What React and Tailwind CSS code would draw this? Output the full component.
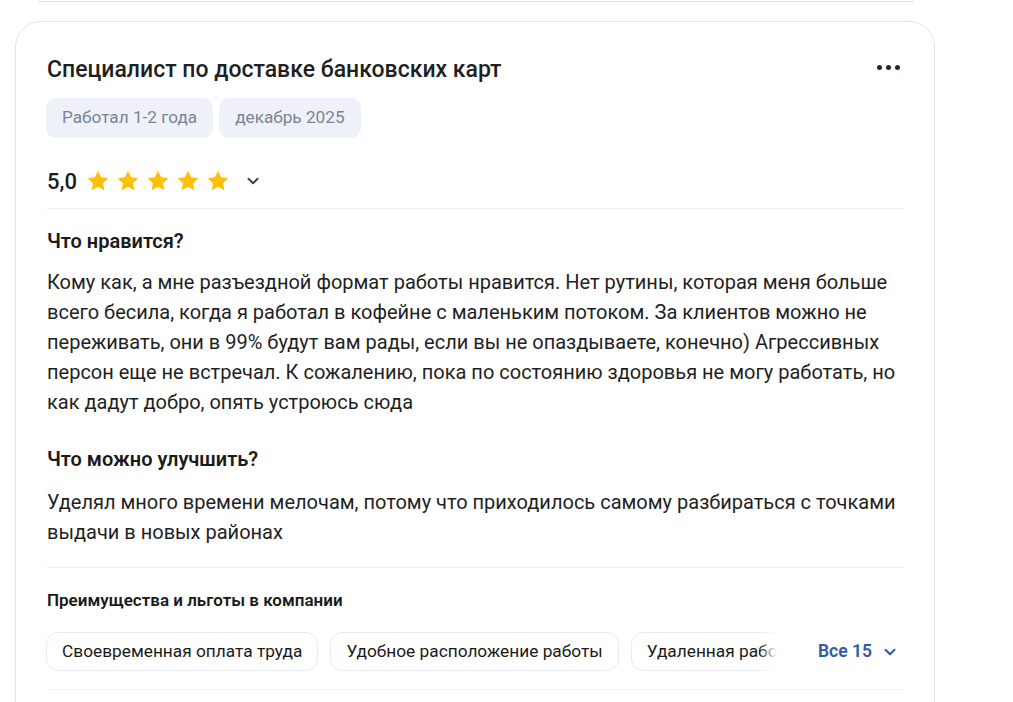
import React from 'react';

function Star() {
    return (
        <svg width="26" height="26" viewBox="0 0 24 24" className="shrink-0">
            <path d="M12 2.5l2.9 6.1 6.6.8-4.9 4.6 1.3 6.6L12 17.3l-5.9 3.3 1.3-6.6-4.9-4.6 6.6-.8z" fill="#ffc107" />
        </svg>
    );
}

function Chevron({ className, color = '#333' }) {
    return (
        <svg width="14" height="14" viewBox="0 0 14 14" className={className}>
            <path d="M2.5 4.8L7 9.3l4.5-4.5" fill="none" stroke={color} strokeWidth="2" strokeLinecap="round" strokeLinejoin="round" />
        </svg>
    );
}

const benefits = ['Своевременная оплата труда', 'Удобное расположение работы', 'Удаленная работа'];

export default function App() {
    return (
        <div className="w-[1013px] h-[702px] overflow-hidden bg-white text-[#1a1a1a]" style={{ fontFamily: 'Roboto, "Noto Sans", sans-serif' }}>
            <div className="ml-[38px] w-[876px] h-[2px] border-b border-[#dfe3eb]"></div>

            <div className="ml-[15px] mt-[19px] w-[920px] border border-[#dfe3eb] rounded-[26px] pl-[31px] pr-[31px] pt-[30px] h-[720px]">
                <div className="flex items-start justify-between">
                    <h2 className="text-[23px] font-medium leading-[36px] text-[#1f1f1f]">Специалист по доставке банковских карт</h2>
                    <div className="flex gap-[4px] mt-[13px] mr-[3px]">
                        <span className="w-[5px] h-[5px] rounded-full bg-[#1f2937]"></span>
                        <span className="w-[5px] h-[5px] rounded-full bg-[#1f2937]"></span>
                        <span className="w-[5px] h-[5px] rounded-full bg-[#1f2937]"></span>
                    </div>
                </div>

                <div className="flex gap-[6px] mt-[10px] -ml-px">
                    <span className="h-[40px] px-[16px] flex items-center rounded-[10px] bg-[#eef1f7] text-[17.2px] text-[#7b8497]">Работал 1-2 года</span>
                    <span className="h-[40px] px-[16px] flex items-center rounded-[10px] bg-[#eef1f7] text-[17.2px] text-[#7b8497]">декабрь 2025</span>
                </div>

                <div className="flex items-center mt-[26px] h-[34px]">
                    <span className="text-[22px] font-medium mr-[8px]">5,0</span>
                    <div className="flex gap-[4px]">
                        <Star /><Star /><Star /><Star /><Star />
                    </div>
                    <Chevron className="ml-[15px]" color="#444" />
                </div>

                <div className="border-t border-[#eceef2] mt-[10px]"></div>

                <h3 className="text-[20px] font-semibold mt-[18px] leading-[28px]">Что нравится?</h3>
                <p className="text-[20px] leading-[30px] mt-[12px] text-[#1f1f1f]">
                    Кому как, а мне разъездной формат работы нравится. Нет рутины, которая меня больше всего бесила, когда я работал в кофейне с маленьким потоком. За клиентов можно не переживать, они в 99% будут вам рады, если вы не опаздываете, конечно) Агрессивных персон еще не встречал. К сожалению, пока по состоянию здоровья не могу работать, но как дадут добро, опять устроюсь сюда
                </p>

                <h3 className="text-[20px] font-semibold mt-[28px] leading-[28px]">Что можно улучшить?</h3>
                <p className="text-[20px] leading-[30px] mt-[14px] text-[#1f1f1f]">
                    Уделял много времени мелочам, потому что приходилось самому разбираться с точками выдачи в новых районах
                </p>

                <div className="border-t border-[#eceef2] mt-[20px]"></div>

                <h4 className="text-[17px] font-semibold mt-[21px] leading-[22px]">Преимущества и льготы в компании</h4>

                <div className="flex items-center mt-[21px] -ml-px">
                    <div className="relative flex gap-[12px] overflow-hidden w-[753px]">
                        {benefits.map(b => (
                            <span key={b} className="shrink-0 h-[39px] px-[15px] flex items-center rounded-[12px] border border-[#e8ebf4] text-[17.3px] whitespace-nowrap">{b}</span>
                        ))}
                        <div className="absolute right-0 top-0 h-full w-[40px] bg-gradient-to-r from-transparent to-white to-45%"></div>
                    </div>
                    <button className="flex items-center ml-[19px] text-[17.5px] font-semibold text-[#2f5aa6]">
                        Все 15
                        <Chevron className="ml-[11px]" color="#2f5aa6" />
                    </button>
                </div>

                <div className="border-t border-[#eceef2] mt-[18px]"></div>
            </div>
        </div>
    );
}
